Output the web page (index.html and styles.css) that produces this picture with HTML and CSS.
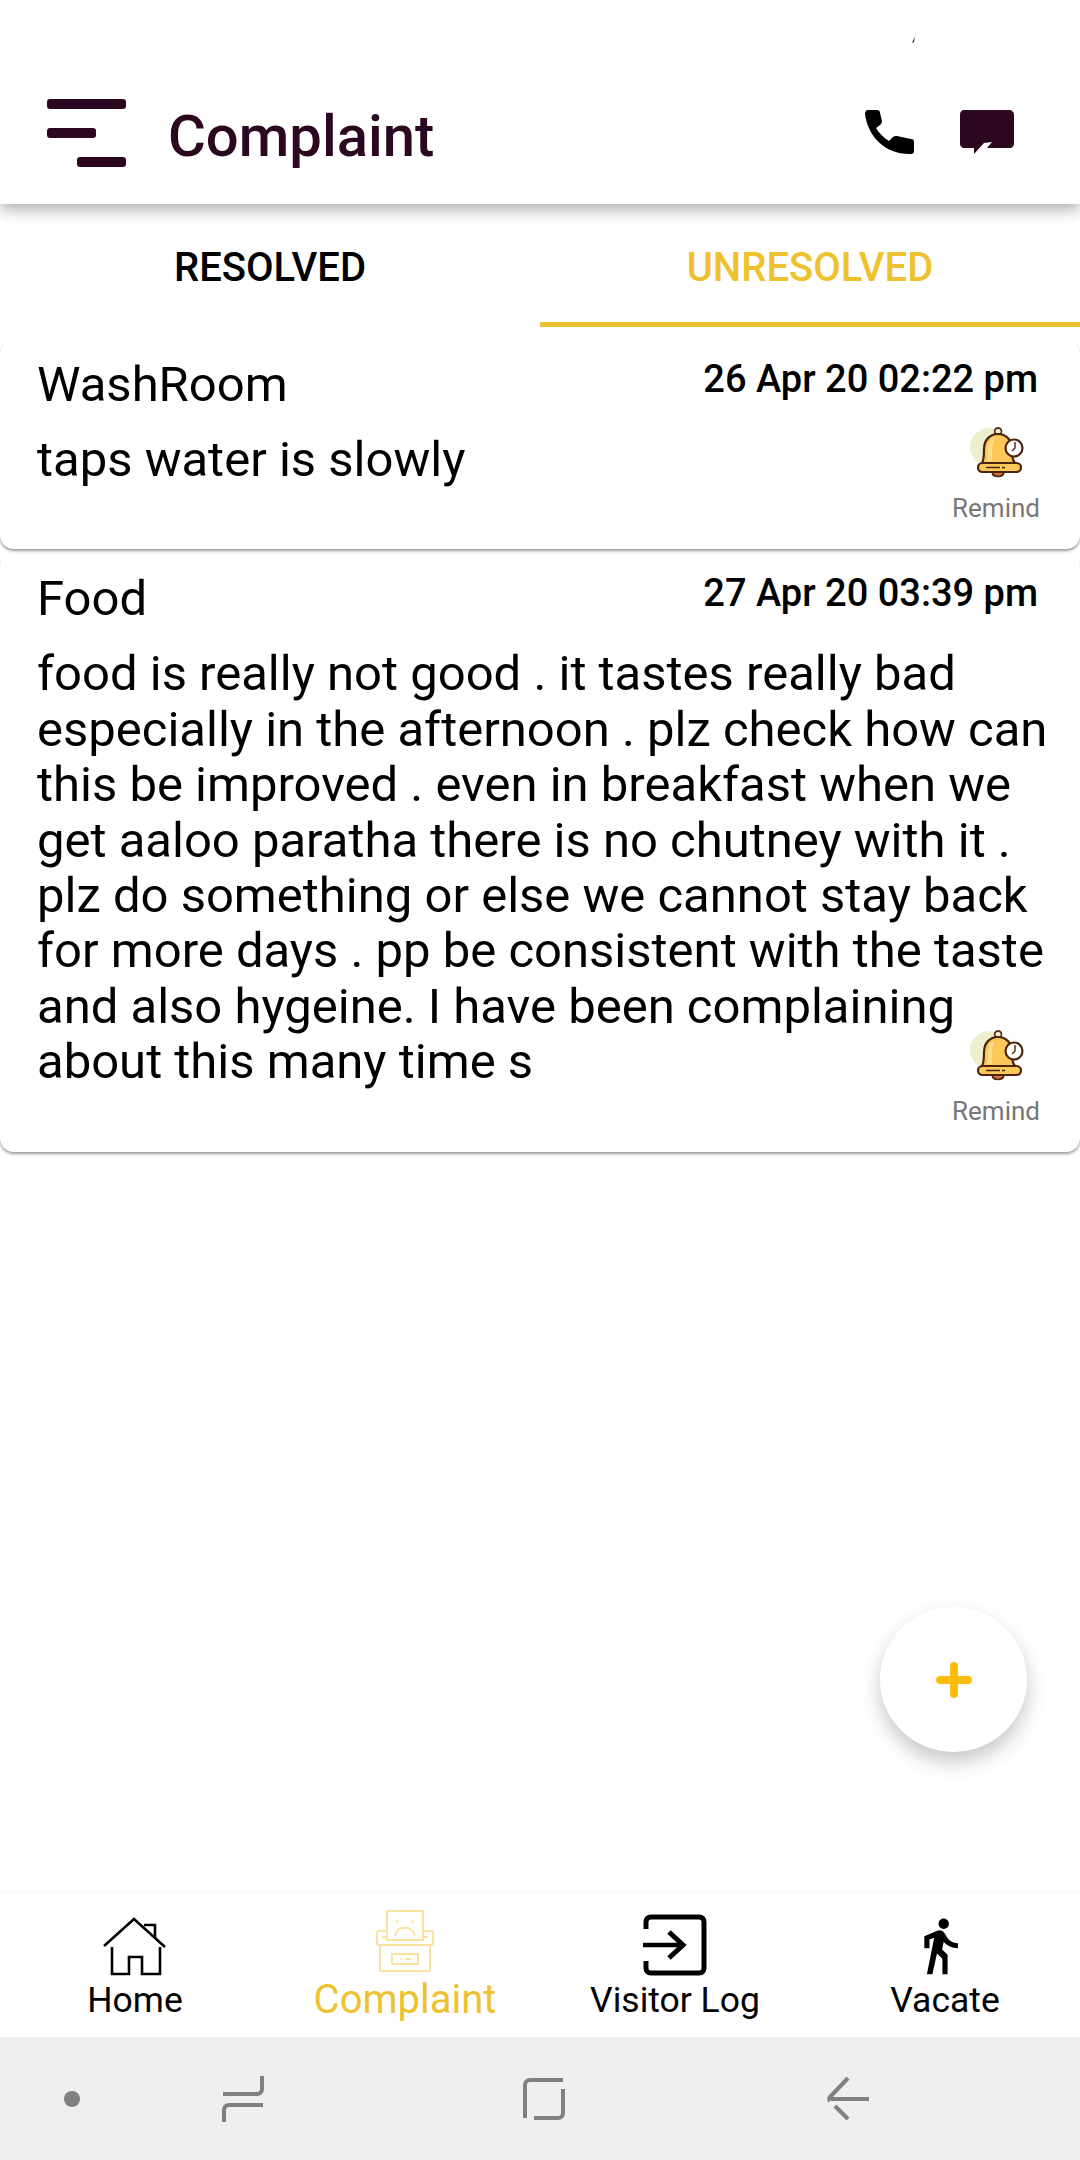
FILE: index.html
```html
<!DOCTYPE html>
<html>
  <head>
    <meta charset="UTF-8">
    <title>Complaint</title>
    <link rel="stylesheet" href="styles.css">
  </head>
  <body>
    <div class="app">
      <header class="app-header">
        <div class="status-row">
          <svg class="status-mark" width="6" height="12" viewBox="0 0 6 12"><path d="M5 0L0 11l2-1 1-6z" fill="#222"/></svg>
        </div>
        <div class="title-row">
          <div class="menu-icon">
            <span class="menu-bar"></span>
            <span class="menu-bar menu-bar-mid"></span>
            <span class="menu-bar menu-bar-low"></span>
          </div>
          <h1 class="page-title">Complaint</h1>
          <div class="header-actions">
            <svg class="phone-icon" width="50" height="47" viewBox="0 0 50 47">
              <path d="M3 0h9c2 0 3 1 3 3l2 8c0 2-1 3-2 4l-4 3c3 5 8 10 13 13l4-4c1-1 2-1 4-1l14 3c2 0 3 1 3 3v9c0 2-1 3-3 3C22 45 3 28 0 4c0-2 1-4 3-4z" fill="#000"/>
            </svg>
            <svg class="chat-icon" width="54" height="46" viewBox="0 0 54 46">
              <path d="M4 0h45c3 0 5 2 5 5v29c0 2-2 4-4 4H27l5-6-8 1-10 11v-6H4c-2 0-4-2-4-4V4c0-2 2-4 4-4z" fill="#2b0820"/>
            </svg>
          </div>
        </div>
      </header>

      <nav class="tabs">
        <div class="tab">RESOLVED</div>
        <div class="tab tab-active">UNRESOLVED</div>
      </nav>

      <main class="list">
        <section class="card">
          <div class="card-top">
            <div class="card-title">WashRoom</div>
            <div class="card-date">26 Apr 20 02:22 pm</div>
          </div>
          <p class="card-text">taps water is slowly</p>
          <div class="remind">
            <svg class="bell" width="60" height="53" viewBox="0 0 60 53">
              <use href="#bell-art"/>
            </svg>
            <span>Remind</span>
          </div>
        </section>
        <section class="card">
          <div class="card-top">
            <div class="card-title">Food</div>
            <div class="card-date">27 Apr 20 03:39 pm</div>
          </div>
          <p class="card-text">food is really not good . it tastes really bad especially in the afternoon . plz check how can this be improved . even in breakfast when we get aaloo paratha there is no chutney with it . plz do something or else we cannot stay back for more days . pp be consistent with the taste and also hygeine. I have been complaining about this many time s</p>
          <div class="remind">
            <svg class="bell" width="60" height="53" viewBox="0 0 60 53">
              <use href="#bell-art"/>
            </svg>
            <span>Remind</span>
          </div>
        </section>
      </main>

      <button class="fab" type="button">
        <svg width="36" height="36" viewBox="0 0 36 36"><path d="M18 4v28M4 18h28" stroke="#fdbb0b" stroke-width="8" stroke-linecap="round"/></svg>
      </button>

      <nav class="bottom-nav">
        <div class="nav-item">
          <svg class="nav-icon" width="64" height="60" viewBox="0 0 64 60" fill="none" stroke="#000" stroke-width="2.6">
            <path d="M1 30L31 3l31 28"/>
            <path d="M41 9h11v13"/>
            <path d="M9 31v27h17V41h13v17h18V31"/>
          </svg>
          <span>Home</span>
        </div>
        <div class="nav-item nav-item-active">
          <svg class="nav-icon nav-icon-tall" width="58" height="62" viewBox="0 0 58 62" fill="none" stroke="#f8e3a0" stroke-width="2">
            <path d="M11 30V1h36v29z"/>
            <path d="M21 10l1 3M37 10l-1 3"/>
            <path d="M19 26c2-11 18-11 20 0"/>
            <path d="M11 21H3c-1 0-2 1-2 2v10c0 1 1 2 2 2h52c1 0 2-1 2-2V23c0-1-1-2-2-2h-8"/>
            <path d="M6 27h5M47 27h5"/>
            <path d="M4 35v25c0 .5.5 1 1 1h48c.5 0 1-.5 1-1V35"/>
            <path d="M16 44h26v10H16z"/>
            <path d="M24 49h1M30 49h5"/>
          </svg>
          <span>Complaint</span>
        </div>
        <div class="nav-item">
          <svg class="nav-icon" width="64" height="62" viewBox="0 0 64 62" fill="none" stroke="#000" stroke-width="5">
            <path d="M3 15V8c0-3 2-5 5-5h48c3 0 5 2 5 5v46c0 3-2 5-5 5H8c-3 0-5-2-5-5v-7"/>
            <path d="M0 31h40" stroke-width="4.4"/>
            <path d="M26 18l14 13-14 13"/>
          </svg>
          <span>Visitor Log</span>
        </div>
        <div class="nav-item">
          <svg class="nav-icon" width="62" height="60" viewBox="2 0.5 24 23.2">
            <path d="M13.5 5.5c1.1 0 2-.9 2-2s-.9-2-2-2-2 .9-2 2 .9 2 2 2zM9.8 8.9L7 23h2.1l1.8-8 2.1 2v6h2v-7.5l-2.1-2 .6-3C14.8 12 16.8 13 19 13v-2c-1.9 0-3.5-1-4.3-2.4l-1-1.6c-.4-.6-1-1-1.7-1-.3 0-.5.1-.8.1L6 8.3V13h2V9.6l1.8-.7"/>
          </svg>
          <span>Vacate</span>
        </div>
      </nav>

      <div class="system-bar">
        <span class="sys-dot"></span>
        <svg class="sys-recents" width="42" height="46" viewBox="0 0 42 46" fill="none" stroke="#808080" stroke-width="4">
          <path d="M1 18h34c3 0 5-2 5-5V0"/>
          <path d="M41 29H7c-3 0-5 2-5 5v12"/>
        </svg>
        <svg class="sys-home" width="42" height="42" viewBox="0 0 42 42" fill="none" stroke="#808080" stroke-width="4">
          <path d="M2 40V7c0-3 2-5 5-5h33"/>
          <path d="M40 11v24c0 3-2 5-5 5H11"/>
        </svg>
        <svg class="sys-back" width="42" height="44" viewBox="0 0 42 44" fill="none" stroke="#808080" stroke-width="4">
          <path d="M42 22H4"/>
          <path d="M21 1L3 20c-1 1-1 3 0 4"/>
          <path d="M8 29l13 13"/>
        </svg>
      </div>
    </div>

    <svg class="svg-defs" width="0" height="0">
      <defs>
        <g id="bell-art">
          <circle cx="20" cy="22" r="19" fill="#eef0cd"/>
          <path d="M29 10a3.500 3.500 0 1 1 .1 0" fill="none" stroke="#5a2c10" stroke-width="1.800"/>
          <path d="M13 38c2-3 2-8 2-14 0-9 6-15 14-15s14 6 14 15c0 6 0 11 3 14z" fill="#fcc858" stroke="#4a2410" stroke-width="2.200"/>
          <path d="M18 36c1-5 1-9 1-14 0-4 3-8 7-9-3 4-3 12-3 23z" fill="#fddc8a"/>
          <path d="M23 47c1 6 11 6 12 0z" fill="#d9703a" stroke="#4a2410" stroke-width="1.600"/>
          <rect x="9" y="38" width="43" height="9" rx="4.500" fill="#fcc858" stroke="#4a2410" stroke-width="2.200"/>
          <path d="M17 42.500h14M33 42.500h3" stroke="#4a2410" stroke-width="1.600"/>
          <circle cx="45" cy="23" r="8.500" fill="#fff" stroke="#4a2410" stroke-width="2.200"/>
          <path d="M46 17v6l-3 3" fill="none" stroke="#4a2410" stroke-width="1.400"/>
        </g>
      </defs>
    </svg>
  </body>
</html>
```

FILE: styles.css
```css
* {
  box-sizing: border-box;
}
body {
  margin: 0;
  font-family: Roboto, 'Noto Sans', sans-serif;
  color: #000;
  background-color: #fff;
}
.app {
  position: relative;
  display: flex;
  flex-direction: column;
  width: 1080px;
  height: 2160px;
  overflow: hidden;
}

/* header */
.app-header {
  position: relative;
  z-index: 2;
  height: 204px;
  background-color: #fff;
  box-shadow: 0 6px 14px rgba(0, 0, 0, 0.3);
}
.status-row {
  display: flex;
  justify-content: flex-end;
  height: 91px;
  padding: 32px 162px 0 0;
}
.status-mark {
  display: block;
}
.title-row {
  display: flex;
  align-items: flex-start;
  padding: 8px 66px 0 47px;
}
.menu-icon {
  display: flex;
  flex-direction: column;
  gap: 19px;
  width: 79px;
}
.menu-bar {
  display: block;
  height: 10px;
  border-radius: 3px;
  background-color: #2b0820;
}
.menu-bar-mid {
  width: 49px;
}
.menu-bar-low {
  width: 49px;
  margin-left: 30px;
}
.page-title {
  margin: 9px 0 0 42px;
  font-size: 58px;
  line-height: 56px;
  font-weight: 500;
  color: #2b0820;
}
.header-actions {
  display: flex;
  gap: 45px;
  margin-left: auto;
  padding-top: 11px;
}

/* tabs */
.tabs {
  display: flex;
  flex: none;
  height: 123px;
}
.tab {
  flex: 1;
  padding-top: 41px;
  text-align: center;
  font-size: 40px;
  line-height: 46px;
  font-weight: 500;
}
.tab-active {
  color: #eec22e;
  border-bottom: 5px solid #eec22e;
}

/* complaint cards */
.list {
  flex: 1;
  padding-top: 13px;
}
.card {
  position: relative;
  margin-bottom: 5px;
  padding: 17px 20px 62px 37px;
  background-color: #fff;
  border-radius: 14px;
  box-shadow: 0 2px 3px rgba(0, 0, 0, 0.4);
}
.card-top {
  display: flex;
  justify-content: space-between;
  align-items: flex-start;
}
.card-title {
  font-size: 49px;
  line-height: 56px;
}
.card-date {
  margin-right: 22px;
  font-size: 38px;
  line-height: 44px;
  font-weight: 500;
}
.card-text {
  margin: 19px 0 0;
  font-size: 49px;
  line-height: 55.4px;
}
.remind {
  position: absolute;
  right: 0;
  bottom: 0;
  display: flex;
  flex-direction: column;
  align-items: flex-end;
  padding: 0 40px 26px 0;
  font-size: 26px;
  line-height: 30px;
  color: #777;
}
.bell {
  display: block;
  margin: 0 11px 15px 0;
}

/* add button */
.fab {
  position: absolute;
  left: 880px;
  top: 1607px;
  display: flex;
  align-items: center;
  justify-content: center;
  width: 147px;
  height: 145px;
  padding: 0;
  border: none;
  border-radius: 50%;
  background-color: #fff;
  box-shadow: 0 10px 20px rgba(0, 0, 0, 0.22);
}

/* bottom navigation */
.bottom-nav {
  display: flex;
  flex: none;
  height: 143px;
  background-color: #fff;
  box-shadow: 0 -3px 3px rgba(0, 0, 0, 0.02);
}
.nav-item {
  display: flex;
  flex: 1;
  flex-direction: column;
  align-items: center;
  justify-content: flex-end;
  padding-bottom: 17px;
  font-size: 35.5px;
  line-height: 40px;
}
.nav-item-active {
  font-size: 40px;
  color: #eec22e;
}
.nav-icon {
  display: block;
  margin-bottom: 4px;
}
.nav-icon-tall {
  margin-bottom: 8px;
}

/* android bar */
.system-bar {
  display: flex;
  flex: none;
  align-items: center;
  height: 123px;
  padding-left: 64px;
  background-color: #efefef;
}
.sys-dot {
  width: 16px;
  height: 16px;
  border-radius: 50%;
  background-color: #808080;
}
.sys-recents {
  margin-left: 142px;
}
.sys-home {
  margin-left: 259px;
}
.sys-back {
  margin-left: 262px;
}
.svg-defs {
  position: absolute;
}
```
